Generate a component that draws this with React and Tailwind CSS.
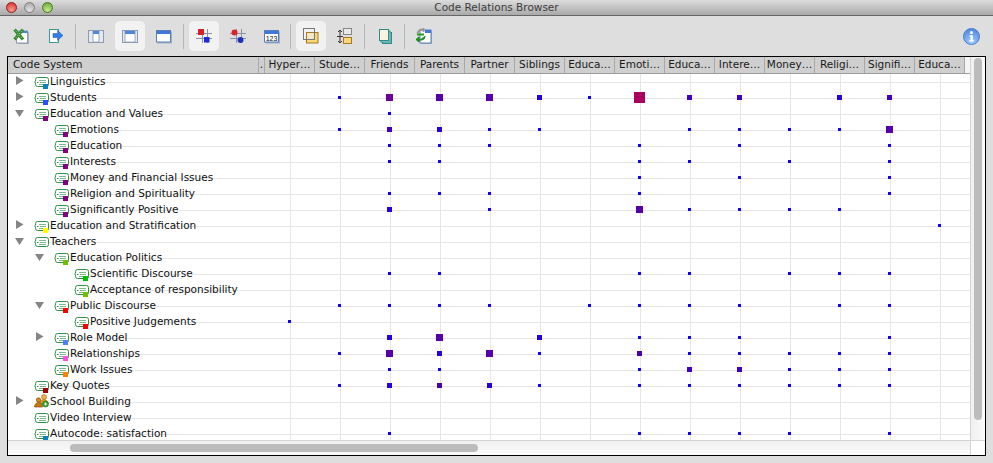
const HEADERS = ["Hyper…", "Stude…", "Friends", "Parents", "Partner", "Siblings", "Educa…", "Emoti…", "Educa…", "Intere…", "Money…", "Religi…", "Signifi…", "Educa…"];

const DOT = {
  s: "w-[3px] h-[3px] bg-[#1400f5]",
  b: "w-[5px] h-[5px] bg-[#2a00d8]",
  c: "w-[5px] h-[5px] bg-[#4000c0]",
  d: "w-[5px] h-[5px] bg-[#4a00a8]",
  l: "w-[7px] h-[7px] bg-[#5500a8]",
  p: "w-[7px] h-[7px] bg-[#6c0098]",
  x: "w-[11px] h-[11px] bg-[#aa0060]",
};

// pl = indent class, arrow = right/down, sq = colour chip on the code icon, dots = column index -> size
const ROWS = [
  { pl: "pl-[7px]", arrow: "right", label: "Linguistics", sq: "bg-[#0a7fc4]", dots: {} },
  { pl: "pl-[7px]", arrow: "right", label: "Students", sq: "bg-[#2a50ff]", dots: { 1: "s", 2: "p", 3: "l", 4: "l", 5: "b", 6: "s", 7: "x", 8: "c", 9: "c", 11: "b", 12: "c" } },
  { pl: "pl-[7px]", arrow: "down", label: "Education and Values", sq: "bg-[#800080]", dots: { 2: "s" } },
  { pl: "pl-[27px]", label: "Emotions", sq: "bg-[#800080]", dots: { 1: "s", 2: "c", 3: "b", 4: "s", 5: "s", 8: "s", 9: "s", 10: "s", 11: "s", 12: "l" } },
  { pl: "pl-[27px]", label: "Education", sq: "bg-[#800080]", dots: { 2: "s", 3: "s", 4: "s", 7: "s", 9: "s", 12: "s" } },
  { pl: "pl-[27px]", label: "Interests", sq: "bg-[#800080]", dots: { 2: "s", 3: "s", 7: "s", 8: "s", 10: "s", 12: "s" } },
  { pl: "pl-[27px]", label: "Money and Financial Issues", sq: "bg-[#800080]", dots: { 7: "s", 9: "s", 12: "s" } },
  { pl: "pl-[27px]", label: "Religion and Spirituality", sq: "bg-[#800080]", dots: { 2: "s", 3: "s", 4: "s", 7: "s", 12: "s" } },
  { pl: "pl-[27px]", label: "Significantly Positive", sq: "bg-[#800080]", dots: { 2: "b", 4: "s", 7: "l", 8: "s", 9: "s", 10: "s", 11: "s" } },
  { pl: "pl-[7px]", arrow: "right", label: "Education and Stratification", sq: "bg-[#ffff00]", dots: { 13: "s" } },
  { pl: "pl-[7px]", arrow: "down", label: "Teachers", dots: {} },
  { pl: "pl-[27px]", arrow: "down", label: "Education Politics", sq: "bg-[#70c000]", dots: {} },
  { pl: "pl-[47px]", label: "Scientific Discourse", sq: "bg-[#00c000]", dots: { 2: "s", 3: "s", 7: "s", 8: "s", 10: "s", 11: "s", 12: "s" } },
  { pl: "pl-[47px]", label: "Acceptance of responsibility", sq: "bg-[#70c000]", dots: {} },
  { pl: "pl-[27px]", arrow: "down", label: "Public Discourse", sq: "bg-[#ff0000]", dots: { 1: "s", 2: "s", 3: "s", 4: "s", 6: "s", 7: "s", 8: "s", 9: "s", 11: "s", 12: "s" } },
  { pl: "pl-[47px]", label: "Positive Judgements", sq: "bg-[#ff0000]", dots: { 0: "s" } },
  { pl: "pl-[27px]", arrow: "right", label: "Role Model", sq: "bg-[#5080ff]", dots: { 2: "b", 3: "l", 5: "b", 7: "s", 8: "s", 9: "s", 12: "s" } },
  { pl: "pl-[27px]", label: "Relationships", sq: "bg-[#ff50e0]", dots: { 1: "s", 2: "l", 3: "b", 4: "l", 5: "s", 7: "d", 8: "s", 9: "s", 10: "s", 11: "s", 12: "s" } },
  { pl: "pl-[27px]", label: "Work Issues", sq: "bg-[#ff8000]", dots: { 2: "s", 3: "s", 7: "s", 8: "c", 9: "c", 10: "s", 11: "s", 12: "s" } },
  { pl: "pl-[7px]", label: "Key Quotes", sq: "bg-[#a00000]", dots: { 1: "s", 2: "b", 3: "d", 4: "b", 5: "s", 7: "s", 8: "s", 9: "s", 10: "s", 11: "s", 12: "s" } },
  { pl: "pl-[7px]", arrow: "right", label: "School Building", set: true, dots: {} },
  { pl: "pl-[7px]", label: "Video Interview", dots: {} },
  { pl: "pl-[7px]", label: "Autocode: satisfaction", sq: "bg-[#0a7fc4]", dots: { 2: "s", 7: "s", 8: "s", 9: "s", 10: "s", 12: "s" } },
];

const HLINE = "bg-[linear-gradient(#e6e6e6,#e6e6e6)] bg-no-repeat bg-[length:100%_1px] bg-[position:0_8px]";
const CELL = "bg-[linear-gradient(#e6e6e6,#e6e6e6),linear-gradient(#e6e6e6,#e6e6e6)] bg-no-repeat bg-[length:100%_1px,1px_100%] bg-[position:0_8px,25px_0]";

const Arrow = ({ dir }) =>
  dir === "down" ? (
    <svg width="9" height="9" viewBox="0 0 9 9" className="mt-[3px]"><path d="M0 1h9L4.500 8z" fill="#858585" /></svg>
  ) : (
    <svg width="9" height="9" viewBox="0 0 9 9" className="mt-[2px]"><path d="M1 0l7.500 4.500L1 9z" fill="#858585" /></svg>
  );

const CodeIcon = ({ sq }) => (
  <div className="relative w-[15px] h-[13px] shrink-0 mt-[2px]">
    <svg width="15" height="13" viewBox="0 0 15 13">
      <path d="M3.500 1.500h9a2 2 0 0 1 2 2v5a2 2 0 0 1-2 2h-9a2 2 0 0 1-2-2v-1.500l-1-1 1-1v-1.500a2 2 0 0 1 2-2z" fill="#fff" stroke="#2f8f48" />
      <path d="M5 4.500h7M6 6.500h6M5 8.500h7" stroke="#7fb78e" />
      <path d="M3 6.500h1.500" stroke="#2f8f48" />
    </svg>
    {sq && <div className={`absolute left-[9px] top-[8px] w-[5px] h-[5px] ${sq}`} />}
  </div>
);

const SetIcon = () => (
  <svg width="15" height="14" viewBox="0 0 15 14" className="shrink-0">
    <circle cx="10" cy="3" r="2.500" fill="#f0b050" stroke="#a86a10" strokeWidth=".6" />
    <path d="M6 10c0-3 2-4.500 4-4.500s4 1.500 4 4.500z" fill="#e89a28" stroke="#a86a10" strokeWidth=".6" />
    <circle cx="4.500" cy="6" r="2.200" fill="#d88a20" stroke="#704000" strokeWidth=".6" />
    <path d="M.5 13c0-3 2-4.500 4-4.500s4 1.500 4 4.500z" fill="#c87810" stroke="#704000" strokeWidth=".6" />
    <circle cx="11.500" cy="10" r="3" fill="#38a838" stroke="#1a6a1a" strokeWidth=".6" />
    <path d="M10 10h3M11.500 8.500v3" stroke="#fff" strokeWidth=".8" />
  </svg>
);

const TreeRow = ({ row }) => (
  <div className="flex h-[16px] shrink-0">
    <div className={`flex w-[257px] shrink-0 ${row.pl}`}>
      <div className="w-[19px] shrink-0">{row.arrow && <Arrow dir={row.arrow} />}</div>
      {row.set ? <SetIcon /> : <CodeIcon sq={row.sq} />}
      <span className={`flex-1 pl-[1px] leading-[15px] whitespace-nowrap text-[#111] ${HLINE}`}>{row.label}</span>
    </div>
    {HEADERS.map((_, i) => (
      <div key={i} className={`flex items-center justify-center w-[50px] shrink-0 pr-px pb-px ${CELL}`}>
        {row.dots[i] && <div className={DOT[row.dots[i]]} />}
      </div>
    ))}
    <div className={`flex-1 ${HLINE}`} />
  </div>
);

const Slot = ({ active, children }) => (
  <div className="flex items-center justify-center w-[34px] h-[30px] shrink-0">
    <div className={`flex items-center justify-center w-[30px] h-[30px] rounded-[5px] ${active ? "bg-[#f2f2f2]" : ""}`}>{children}</div>
  </div>
);

const Sep = ({ className }) => <div className={`w-px h-[25px] bg-[#b5b5b5] shrink-0 ${className}`} />;

const Panels = ({ wide }) => (
  <svg width="16" height="16" viewBox="0 0 16 16">
    <rect x=".5" y="2.500" width="15" height="12" fill="#e4e8ef" stroke="#8a9bb5" />
    <rect x={wide ? 3 : 5} y="3" width={wide ? 10 : 6} height="11" fill="#fff" stroke="#8a9bb5" strokeWidth=".8" />
    <rect x={wide ? 3 : 5} y="3" width={wide ? 10 : 6} height="3" fill="#4f86d8" />
  </svg>
);

const Win = ({ children }) => (
  <svg width="16" height="16" viewBox="0 0 16 16">
    <rect x="1.500" y="3.500" width="14.500" height="12" fill="#9fb0c8" />
    <rect x=".5" y="2.500" width="14" height="11.500" fill="#fff" stroke="#5b7fb5" />
    <rect x="1" y="3" width="13" height="3" fill="#3f78d8" />
    {children}
  </svg>
);

const Cross = ({ round }) => (
  <svg width="16" height="16" viewBox="0 0 16 16">
    <path d="M6.500 1v14M11.500 1v14M0 5.500h16M0 10.500h16" stroke="#8794a8" />
    {round ? (
      <>
        <circle cx="4.500" cy="4.500" r="3" fill="#d8242c" />
        <circle cx="10.500" cy="12" r="3" fill="#2030b8" />
      </>
    ) : (
      <>
        <rect x="2" y="1" width="6" height="6" fill="#d8202a" />
        <rect x="8" y="9" width="5.500" height="5.500" fill="#1a28e0" />
      </>
    )}
  </svg>
);

const Toolbar = () => (
  <div className="flex items-center h-[40px] pl-[4px]">
    <Slot>
      <svg width="16" height="16" viewBox="0 0 16 16">
        <rect x="5" y="4" width="11" height="12" fill="#9fb0c8" />
        <rect x="3.500" y="3" width="11" height="12" fill="#fff" stroke="#7a8aa0" strokeWidth=".8" />
        <rect x="6" y="3" width="8.500" height="2" fill="#4f86d8" />
        <path d="M1.500 1.500l8.500 10M10 1.500l-8.500 10" stroke="#2f8a2f" strokeWidth="3.200" />
        <path d="M1.500 1.500l8.500 10M10 1.500l-8.500 10" stroke="#c8e4b8" strokeWidth="1" strokeDasharray="1 1.500" />
      </svg>
    </Slot>
    <Slot>
      <svg width="16" height="16" viewBox="0 0 16 16" className="ml-[2px]">
        <rect x="1.500" y="1.500" width="9" height="13" fill="#fff" stroke="#3a9a9a" />
        <path d="M5 5.500h4.500v-3l5.500 5-5.500 5v-3h-4.500z" fill="#2f7fe8" stroke="#1f5ab0" strokeWidth=".5" />
      </svg>
    </Slot>
    <Sep className="ml-[3px] mr-[3px]" />
    <Slot><Panels /></Slot>
    <Slot active><Panels wide /></Slot>
    <Slot><Win /></Slot>
    <Sep className="ml-[2px] mr-[3px]" />
    <Slot active><Cross /></Slot>
    <Slot><Cross round /></Slot>
    <Slot>
      <Win>
        <text x="7.500" y="12.500" fontSize="7" textAnchor="middle" fill="#111" fontFamily="Liberation Sans">123</text>
      </Win>
    </Slot>
    <Sep className="ml-px mr-[3px]" />
    <Slot active>
      <svg width="16" height="16" viewBox="0 0 16 16">
        <rect x="3.500" y="4.500" width="11.500" height="10.500" fill="#f8d878" stroke="#a87820" />
        <rect x=".5" y=".5" width="11" height="11" fill="none" stroke="#777" />
        <rect x="4" y="5" width="7" height="6" fill="#f0e8c8" />
      </svg>
    </Slot>
    <Slot>
      <svg width="16" height="16" viewBox="0 0 16 16">
        <path d="M3 2v13M1 4l2-2 2 2M1 13l2 2 2-2M0 8.500h6" stroke="#333" fill="none" />
        <rect x="6.500" y=".5" width="8" height="6" fill="#e8e8e8" stroke="#888" />
        <rect x="6.500" y="9.500" width="8" height="6" fill="#f8d878" stroke="#a87820" />
      </svg>
    </Slot>
    <Sep className="ml-[2px] mr-[2px]" />
    <Slot>
      <svg width="16" height="16" viewBox="0 0 16 16">
        <rect x="6.500" y="4.500" width="9" height="11" fill="#9fd4d4" stroke="#2f8a8a" />
        <rect x="5" y="3" width="9" height="11" fill="#c8eaea" stroke="#2f8a8a" />
        <rect x="3.500" y="1.500" width="9" height="11" fill="#f8f4e0" stroke="#2f8a8a" />
      </svg>
    </Slot>
    <Sep className="ml-[3px] mr-[2px]" />
    <Slot>
      <svg width="16" height="16" viewBox="0 0 16 16">
        <rect x="5" y="3" width="11" height="13" fill="#9fb0c8" />
        <rect x="4" y="2" width="11" height="13" fill="#fff" stroke="#5b7fb5" />
        <rect x="9" y="2" width="6" height="3" fill="#3f78d8" />
        <path d="M1 6c0-3 2-5 5-5l2 0M8 0v4L5 2z" fill="#9a9a9a" stroke="#9a9a9a" strokeWidth=".8" />
        <path d="M9 8c0 3-2 4-4 4H3M3 9v5l-3-2.500z" fill="#20a020" stroke="#108010" strokeWidth="1" />
        <path d="M1 6.500h7" stroke="#20a020" strokeWidth="2" />
      </svg>
    </Slot>
    <div className="flex-1" />
    <div className="pr-[13px] flex">
      <svg width="17" height="17" viewBox="0 0 17 17">
        <defs>
          <radialGradient id="infoFill" cx="50%" cy="85%" r="80%">
            <stop offset="0" stopColor="#a8ccf8" />
            <stop offset="1" stopColor="#4f8ae0" />
          </radialGradient>
        </defs>
        <circle cx="8.500" cy="8.500" r="8" fill="url(#infoFill)" stroke="#4a7fd0" />
        <circle cx="8.500" cy="4.500" r="1.500" fill="#fff" />
        <path d="M6.500 7.300h3.300v5h1.200v1.200H6.200v-1.200h1.300V8.500h-1z" fill="#fff" />
      </svg>
    </div>
  </div>
);

export default function App() {
  return (
    <div className="w-[993px] h-[463px] overflow-hidden bg-[#dedede] font-['DejaVu_Sans',sans-serif] text-[10.5px]">
      <div className="relative flex items-center justify-center h-[16px] border-b border-[#666] bg-[linear-gradient(#dcdcdc,#a9a9a9)] text-[#3c3c3c]">
        <div className="absolute left-[6px] top-[2px] flex gap-[7px]">
          <div className="w-[11px] h-[11px] rounded-full border border-[#8a2020] bg-[radial-gradient(circle_at_50%_80%,#ff9a8a,#d82a2a)]" />
          <div className="w-[11px] h-[11px] rounded-full border border-[#808080] bg-[radial-gradient(circle_at_50%_80%,#e4e4e4,#a0a0a0)]" />
          <div className="w-[11px] h-[11px] rounded-full border border-[#4a7a20] bg-[radial-gradient(circle_at_50%_80%,#c8ec90,#5fa030)]" />
        </div>
        Code Relations Browser
      </div>
      <Toolbar />
      <div className="ml-[7px] w-[979px] h-[400px] border border-black bg-white flex flex-col">
        <div className="flex h-[383px]">
          <div className="flex-1 min-w-0 flex flex-col">
            <div className="flex h-[17px] shrink-0 bg-[#cfcfcf] border-b border-[#9c9c9c] text-[#1a1a1a]">
              <div className="w-[250px] shrink-0 pl-[5px] leading-[15px]">Code System</div>
              <div className="w-[6px] shrink-0 border-l border-[#a8a8a8] leading-[15px] text-center">.</div>
              {HEADERS.map((h, i) => (
                <div key={i} className="w-[50px] shrink-0 border-l border-[#a8a8a8] leading-[15px] text-center whitespace-nowrap overflow-hidden">{h}</div>
              ))}
              <div className="flex-1 border-l border-[#a8a8a8] bg-[#f4f4f4]" />
            </div>
            <div className="flex-1 min-h-0 overflow-hidden flex flex-col">
              {ROWS.map((r) => <TreeRow key={r.label} row={r} />)}
            </div>
          </div>
          <div className="w-[15px] shrink-0 border-l border-[#d4d4d4] bg-[linear-gradient(90deg,#f0f0f0,#fbfbfb)] pl-[3px] pt-[1px]">
            <div className="w-[8px] h-[362px] rounded-full bg-[#bcbcbc]" />
          </div>
        </div>
        <div className="flex flex-1 min-h-0 border-t border-[#d4d4d4]">
          <div className="flex-1 bg-[linear-gradient(#f0f0f0,#fbfbfb)] pl-[62px] pt-[3px]">
            <div className="w-[408px] h-[8px] rounded-full bg-[#bcbcbc]" />
          </div>
          <div className="w-[15px] shrink-0 border-l border-[#d4d4d4] bg-white" />
        </div>
      </div>
    </div>
  );
}
